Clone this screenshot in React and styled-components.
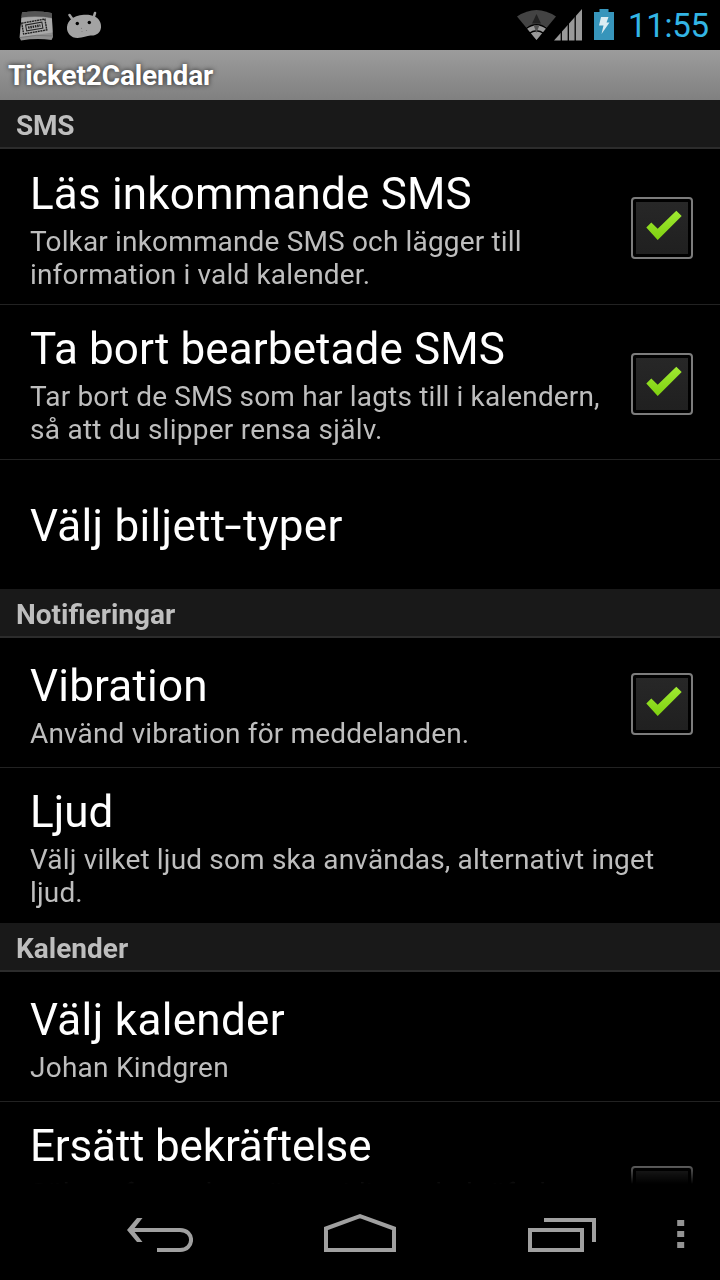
import React from 'react';
import styled, { createGlobalStyle } from 'styled-components';

const GlobalStyle = createGlobalStyle`
  * { box-sizing: border-box; }
  body { margin: 0; background: #000; font-family: Roboto, "Liberation Sans", sans-serif; }
  svg { display: block; flex: none; }
`;
const Screen = styled.div`
  width: 720px; height: 1280px; display: flex; flex-direction: column;
  background: #000; overflow: hidden;
`;
const StatusBar = styled.header`
  height: 50px; flex: none; display: flex; justify-content: space-between;
  padding: 0 10px 0 16px;
`;
const Tray = styled.div`display: flex;`;
const Clock = styled.time`
  margin-left: 12px; width: 82px; font-size: 33px; line-height: 52px;
  letter-spacing: -0.3px; color: #33b5e5; white-space: nowrap;
`;
const TitleBar = styled.h1`
  height: 50px; flex: none; margin: 0; padding: 0 8px; font-size: 28px; line-height: 52px;
  font-weight: 700; letter-spacing: -0.14px; color: #fff; text-shadow: 0 0 5px rgba(0,0,0,.75);
  background: linear-gradient(#9c9c9c, #808080);
`;
const List = styled.main`
  height: 1084px; flex: none; overflow: hidden; display: flex; flex-direction: column;
  mask-image: linear-gradient(#000 calc(100% - 24px), transparent);
`;
const SectionHeader = styled.h2`
  height: 49px; flex: none; margin: 0; padding: 0 16px; font-size: 28px; line-height: 51px;
  font-weight: 700; letter-spacing: ${p => p.$ls || 0}px; color: #bebebe;
  background: #191919; border-bottom: 2px solid #2c2c2c;
`;
const Row = styled.section`
  height: ${p => p.$h}px; flex: none; display: flex; align-items: center;
  padding: 0 27px 0 30px; border-bottom: 1px solid ${p => (p.$last ? '#000' : '#222')};
`;
const Copy = styled.div`
  flex: 1; padding-top: ${p => p.$top ?? 5}px;
`;
const Title = styled.div`
  font-size: 44px; line-height: 52px; color: #fff; white-space: nowrap;
  letter-spacing: ${p => p.$ls || 0}px;
`;
const Hyphen = styled.span`
  display: inline-block; transform: scaleX(1.4); margin: 0 3px 0 2px;
`;
const Summary = styled.div`
  margin-top: 5px; min-height: ${p => (p.$lines || 1) * 33}px;
  font-size: 28px; line-height: 33px; color: #bebebe; white-space: nowrap;
`;
const Line = styled.span`
  display: block; width: max-content; letter-spacing: ${p => p.$ls ?? 0.16}px;
`;
const Box = styled.div`
  width: 62px; height: 62px; flex: none; margin-top: 3px; padding: 3px;
  border: 2px solid #7c7c7c; border-radius: 4px; background: #000;
`;
const BoxFace = styled.div`
  width: 52px; height: 52px; background: linear-gradient(#272727, #202020);
`;
const NavBar = styled.nav`
  height: 96px; flex: none; display: flex; padding: 30px 0 0 127px;
`;
const NavButton = styled.div`
  height: 40px; margin-right: ${p => p.$gap || 0}px;
`;

function Checkbox({ checked }) {
  return (
    <Box>
      <BoxFace>
        {checked && (
          <svg width="52" height="52" viewBox="5 5 52 52">
            <defs>
              <linearGradient id="tick" x1="0" y1="0" x2="0" y2="1">
                <stop offset="0" stopColor="#a0ea32" /><stop offset="1" stopColor="#7fd010" />
              </linearGradient>
            </defs>
            <path d="M15.3 30.5 20.3 25.5 26.7 31.8 45.3 13.7 50.7 19 26.7 43Z" fill="url(#tick)" />
          </svg>
        )}
      </BoxFace>
    </Box>
  );
}

const TicketIcon = () => (
  <svg width="42" height="50" viewBox="16 0 42 50">
    <path d="M22 12.5q14-2 29.500.5l1.500 24-1.500 3q-15-2-30.500 0.500l-1.500-3z" fill="#8f8f8f" />
    <path d="M22 12.500q14-2 29.500.5l.5 5q-15-2.500-30.500-.5z" fill="#555" />
    <path d="M21.500 18q15-2 30.500.5l.5 14q-15 2-32.500 5z" fill="#a9a9a9" />
    <path d="M20 37.500q16-3.500 33-1.500" stroke="#777" fill="none" />
    <g transform="rotate(-10 34.500 26.500)" fill="none" stroke="#222">
      <rect x="22.500" y="21" width="23.500" height="11" strokeWidth="1.400" strokeDasharray="2 .6" />
      <rect x="26" y="23.500" width="16.500" height="6" strokeWidth="1" />
      <path d="M28 26.500h12.500" strokeWidth="2.400" strokeDasharray="1.500 .8" />
    </g>
  </svg>
);
const BeanIcon = () => (
  <svg width="50" height="50" viewBox="58 0 50 50">
    <path d="M69.500 15 73 20M95 13 93.500 18" stroke="#a3a3a3" strokeWidth="2.600" strokeLinecap="round" />
    <path d="M72 18.500C77 14.500 89 13.500 94.500 16.500C99 18 101.500 23 101 27.500C100.500 33 96 36 90.500 35.500C87 35.500 83 38 77.500 38C71 38 66.500 33 67 27C67.300 23.500 69 20.500 72 18.500Z" fill="#a3a3a3" />
    <circle cx="77.300" cy="23.500" r="1.700" /><circle cx="89.300" cy="22.500" r="1.700" />
    <circle cx="81.500" cy="28.300" r=".6" fill="#777" /><circle cx="86.500" cy="30.500" r=".6" fill="#777" /><circle cx="82" cy="31.500" r=".5" fill="#777" />
  </svg>
);
const WifiIcon = () => (
  <svg width="38" height="50" viewBox="516 0 38 50" overflow="visible">
    <path d="M536.500 40 517 16.500Q536.500 3.500 556 16.500Z" fill="#434343" />
    <path d="M536.500 40 526 27.300Q536.500 21.500 547 27.300Z" fill="#999" />
    <path d="M525.500 28.800Q536.500 20.500 547.500 28.800M529 33.500Q536.500 28 544 33.500" fill="none" stroke="#000" strokeWidth="1.500" />
    <path d="M536.500 14 541 23.500H532Z" fill="#222" />
    <path d="M533.500 25h6l-3 8z" fill="#505050" />
  </svg>
);
const SignalIcon = () => (
  <svg width="34" height="50" viewBox="554 0 34 50">
    <path d="M554 40.500 582 9V40.500Z" fill="#999" />
    <path d="M561.300 8V42M568.300 8V42M575.200 8V42" stroke="#000" strokeWidth="1.300" />
  </svg>
);
const BatteryIcon = () => (
  <svg width="28" height="50" viewBox="588 0 28 50">
    <path d="M594 12H599.500V9H608.500V12H614V40H594Z" fill="#3795bb" />
    <path d="M601 17H608.500L606.500 22.500H609.500L601.500 34L603.500 25.500H599Z" fill="#dcecf2" />
  </svg>
);

export default function App() {
  return (
    <Screen>
      <GlobalStyle />
      <StatusBar>
        <Tray><TicketIcon /><BeanIcon /></Tray>
        <Tray><WifiIcon /><SignalIcon /><BatteryIcon /><Clock>11:55</Clock></Tray>
      </StatusBar>
      <TitleBar>Ticket2Calendar</TitleBar>
      <List>
        <SectionHeader $ls={-0.3}>SMS</SectionHeader>
        <Row $h={156}>
          <Copy>
            <Title $ls={0.17}>Läs inkommande SMS</Title>
            <Summary><Line>Tolkar inkommande SMS och lägger till</Line><Line>information i vald kalender.</Line></Summary>
          </Copy>
          <Checkbox checked />
        </Row>
        <Row $h={155}>
          <Copy>
            <Title $ls={0.1}>Ta bort bearbetade SMS</Title>
            <Summary><Line>Tar bort de SMS som har lagts till i kalendern,</Line><Line $ls={0.26}>så att du slipper rensa själv.</Line></Summary>
          </Copy>
          <Checkbox checked />
        </Row>
        <Row $h={129} $last>
          <Copy $top={3}><Title $ls={0.3}>Välj biljett<Hyphen>-</Hyphen>typer</Title></Copy>
        </Row>
        <SectionHeader>Notifieringar</SectionHeader>
        <Row $h={130}>
          <Copy><Title $ls={0.22}>Vibration</Title><Summary><Line>Använd vibration för meddelanden.</Line></Summary></Copy>
          <Checkbox checked />
        </Row>
        <Row $h={155} $last>
          <Copy $top={4}>
            <Title>Ljud</Title>
            <Summary><Line>Välj vilket ljud som ska användas, alternativt inget</Line><Line>ljud.</Line></Summary>
          </Copy>
        </Row>
        <SectionHeader>Kalender</SectionHeader>
        <Row $h={130}>
          <Copy><Title $ls={0.33}>Välj kalender</Title><Summary><Line $ls={0.25}>Johan Kindgren</Line></Summary></Copy>
        </Row>
        <Row $h={188}>
          <Copy $top={4}>
            <Title $ls={-0.17}>Ersätt bekräftelse</Title>
            <Summary $lines={3}><Line>Söker efter och ersätter tidigare bekräftelse</Line></Summary>
          </Copy>
          <Checkbox />
        </Row>
      </List>
      <NavBar>
        <NavButton $gap={131}>
          <svg width="66" height="40" viewBox="127 1214 66 40">
            <path d="M127 1230 137 1218H142.500L133 1230 142.500 1242H137Z" fill="#a0a0a0" />
            <path d="M131 1230H180C195 1230 194.500 1250 180 1250H157" fill="none" stroke="#a0a0a0" strokeWidth="4" />
          </svg>
        </NavButton>
        <NavButton $gap={132}>
          <svg width="72" height="40" viewBox="324 1214 72 40">
            <path d="M326 1250V1228.500L360 1216.200 394 1228.500V1250Z" fill="none" stroke="#a0a0a0" strokeWidth="4" />
          </svg>
        </NavButton>
        <NavButton $gap={81}>
          <svg width="68" height="40" viewBox="528 1214 68 40">
            <path d="M530 1230H582V1250H530ZM544 1220H594V1242" fill="none" stroke="#a0a0a0" strokeWidth="4" />
          </svg>
        </NavButton>
        <NavButton>
          <svg width="8" height="40" viewBox="677 1214 8 40">
            <path d="M677.200 1220h7v6h-7zM677.200 1231h7v6h-7zM677.200 1242h7v6h-7z" fill="#949494" />
          </svg>
        </NavButton>
      </NavBar>
    </Screen>
  );
}
